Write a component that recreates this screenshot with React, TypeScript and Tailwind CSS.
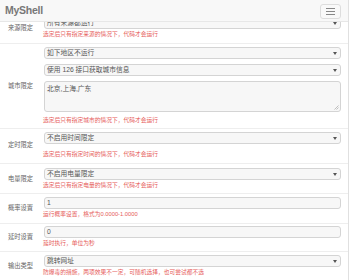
import React from 'react';

const cjk = "font-['Liberation_Sans','Noto_Sans_CJK_SC',sans-serif]";

const Caret = () => (
  <svg width="4" height="3" viewBox="0 0 4 3" className="shrink-0">
    <polygon points="0,0 4,0 2,3" fill="#555" />
  </svg>
);

// Fake select box
const Select = ({ value, className = '' }: { value: string; className?: string }) => (
  <div className={`h-[12px] flex items-center justify-between pl-[2px] pr-[3px] bg-[#f7f7f7] border border-[#d4d4d4] rounded-[3px] text-[6.75px] leading-none text-[#555] ${className}`}>
    <span>{value}</span>
    <Caret />
  </div>
);

const Input = ({ value }: { value: string }) => (
  <div className="h-[12px] flex items-center pl-[2px] bg-[#f7f7f7] border border-[#d4d4d4] rounded-[3px] text-[6.75px] leading-none text-[#555]">
    {value}
  </div>
);

const Help = ({ text, className = 'mt-[1px]' }: { text: string; className?: string }) => (
  <p className={`h-[8px] leading-[8px] text-[5.75px] text-[#e65c5a] -ml-[1px] whitespace-nowrap ${className}`}>{text}</p>
);

interface RowProps {
  label: string;
  children: React.ReactNode;
  className?: string;
  divider?: boolean;
}

const Row: React.FC<RowProps> = ({ label, children, className = 'pt-[3px] pb-[5px]', divider = true }) => (
  <div className={`flex items-center ${divider ? 'border-t border-[#eeeeee]' : ''} ${className}`}>
    <div className="w-[44px] shrink-0 pr-[11px] text-right text-[6.25px] text-[#666] whitespace-nowrap">{label}</div>
    <div className="flex-1 min-w-0 pr-[7px] flex flex-col">{children}</div>
  </div>
);

export default function App() {
  return (
    <div className={`relative w-[349px] h-[280px] overflow-hidden bg-white border-r border-[#e0e0e0] ${cjk}`}>
      {/* navbar lies over the scrolled form */}
      <div className="absolute top-0 left-0 right-0 h-[22px] z-10 bg-[#f8f8f8] border-b border-[#e7e7e7] flex items-center justify-between pl-[5px] pr-[7px]">
        <span className="text-[10.5px] font-bold text-[#777] tracking-tight">MyShell</span>
        <button className="w-[21px] h-[15px] mt-[1px] rounded-[3px] border border-[#dddddd] bg-[#f9f9f9] flex flex-col items-center justify-center gap-[2px]">
          <span className="block w-[9px] h-[1px] bg-[#888]" />
          <span className="block w-[9px] h-[1px] bg-[#888]" />
          <span className="block w-[9px] h-[1px] bg-[#888]" />
        </button>
      </div>

      <div className="pt-[14px]">
        <Row label="来源限定" divider={false}>
          <Select value="所有来源都运行" />
          <Help text="选定后只有指定来源的情况下，代码才会运行" />
        </Row>

        <Row label="城市限定" className="pt-[3px] pb-[4px]">
          <Select value="如下地区不运行" />
          <Select value="使用 126 接口获取城市信息" className="mt-[5px]" />
          <div className="relative mt-[5px] h-[31px] bg-[#f7f7f7] border border-[#d4d4d4] rounded-[3px] px-[2px] pt-[2px] text-[6.75px] leading-[9px] text-[#555]">
            北京,上海,广东
            <svg width="5" height="5" viewBox="0 0 5 5" className="absolute right-[1px] bottom-[1px]">
              <line x1="0.5" y1="4.5" x2="4.5" y2="0.5" stroke="#999" strokeWidth="0.6" />
              <line x1="2.5" y1="4.5" x2="4.5" y2="2.5" stroke="#999" strokeWidth="0.6" />
            </svg>
          </div>
          <Help text="选定后只有指定城市的情况下，代码才会运行" className="mt-[4px]" />
        </Row>

        <Row label="定时限定">
          <Select value="不启用时间限定" />
          <Help text="选定后只有指定时间的情况下，代码才会运行" className="mt-[6px]" />
        </Row>

        <Row label="电量限定" className="pt-[4px] pb-[4px]">
          <Select value="不启用电量限定" />
          <Help text="选定后只有指定电量的情况下，代码才会运行" />
        </Row>

        <Row label="概率设置">
          <Input value="1" />
          <Help text="运行概率设置，格式为0.0000-1.0000" />
        </Row>

        <Row label="延时设置" className="pt-[2px] pb-[4px]">
          <Input value="0" />
          <Help text="延时执行，单位为秒" />
        </Row>

        <Row label="输出类型">
          <Select value="跳转网址" />
          <Help text="防爆毒的措施，两项效果不一定，可随机选择，也可尝试都不选" />
        </Row>
      </div>
    </div>
  );
}
